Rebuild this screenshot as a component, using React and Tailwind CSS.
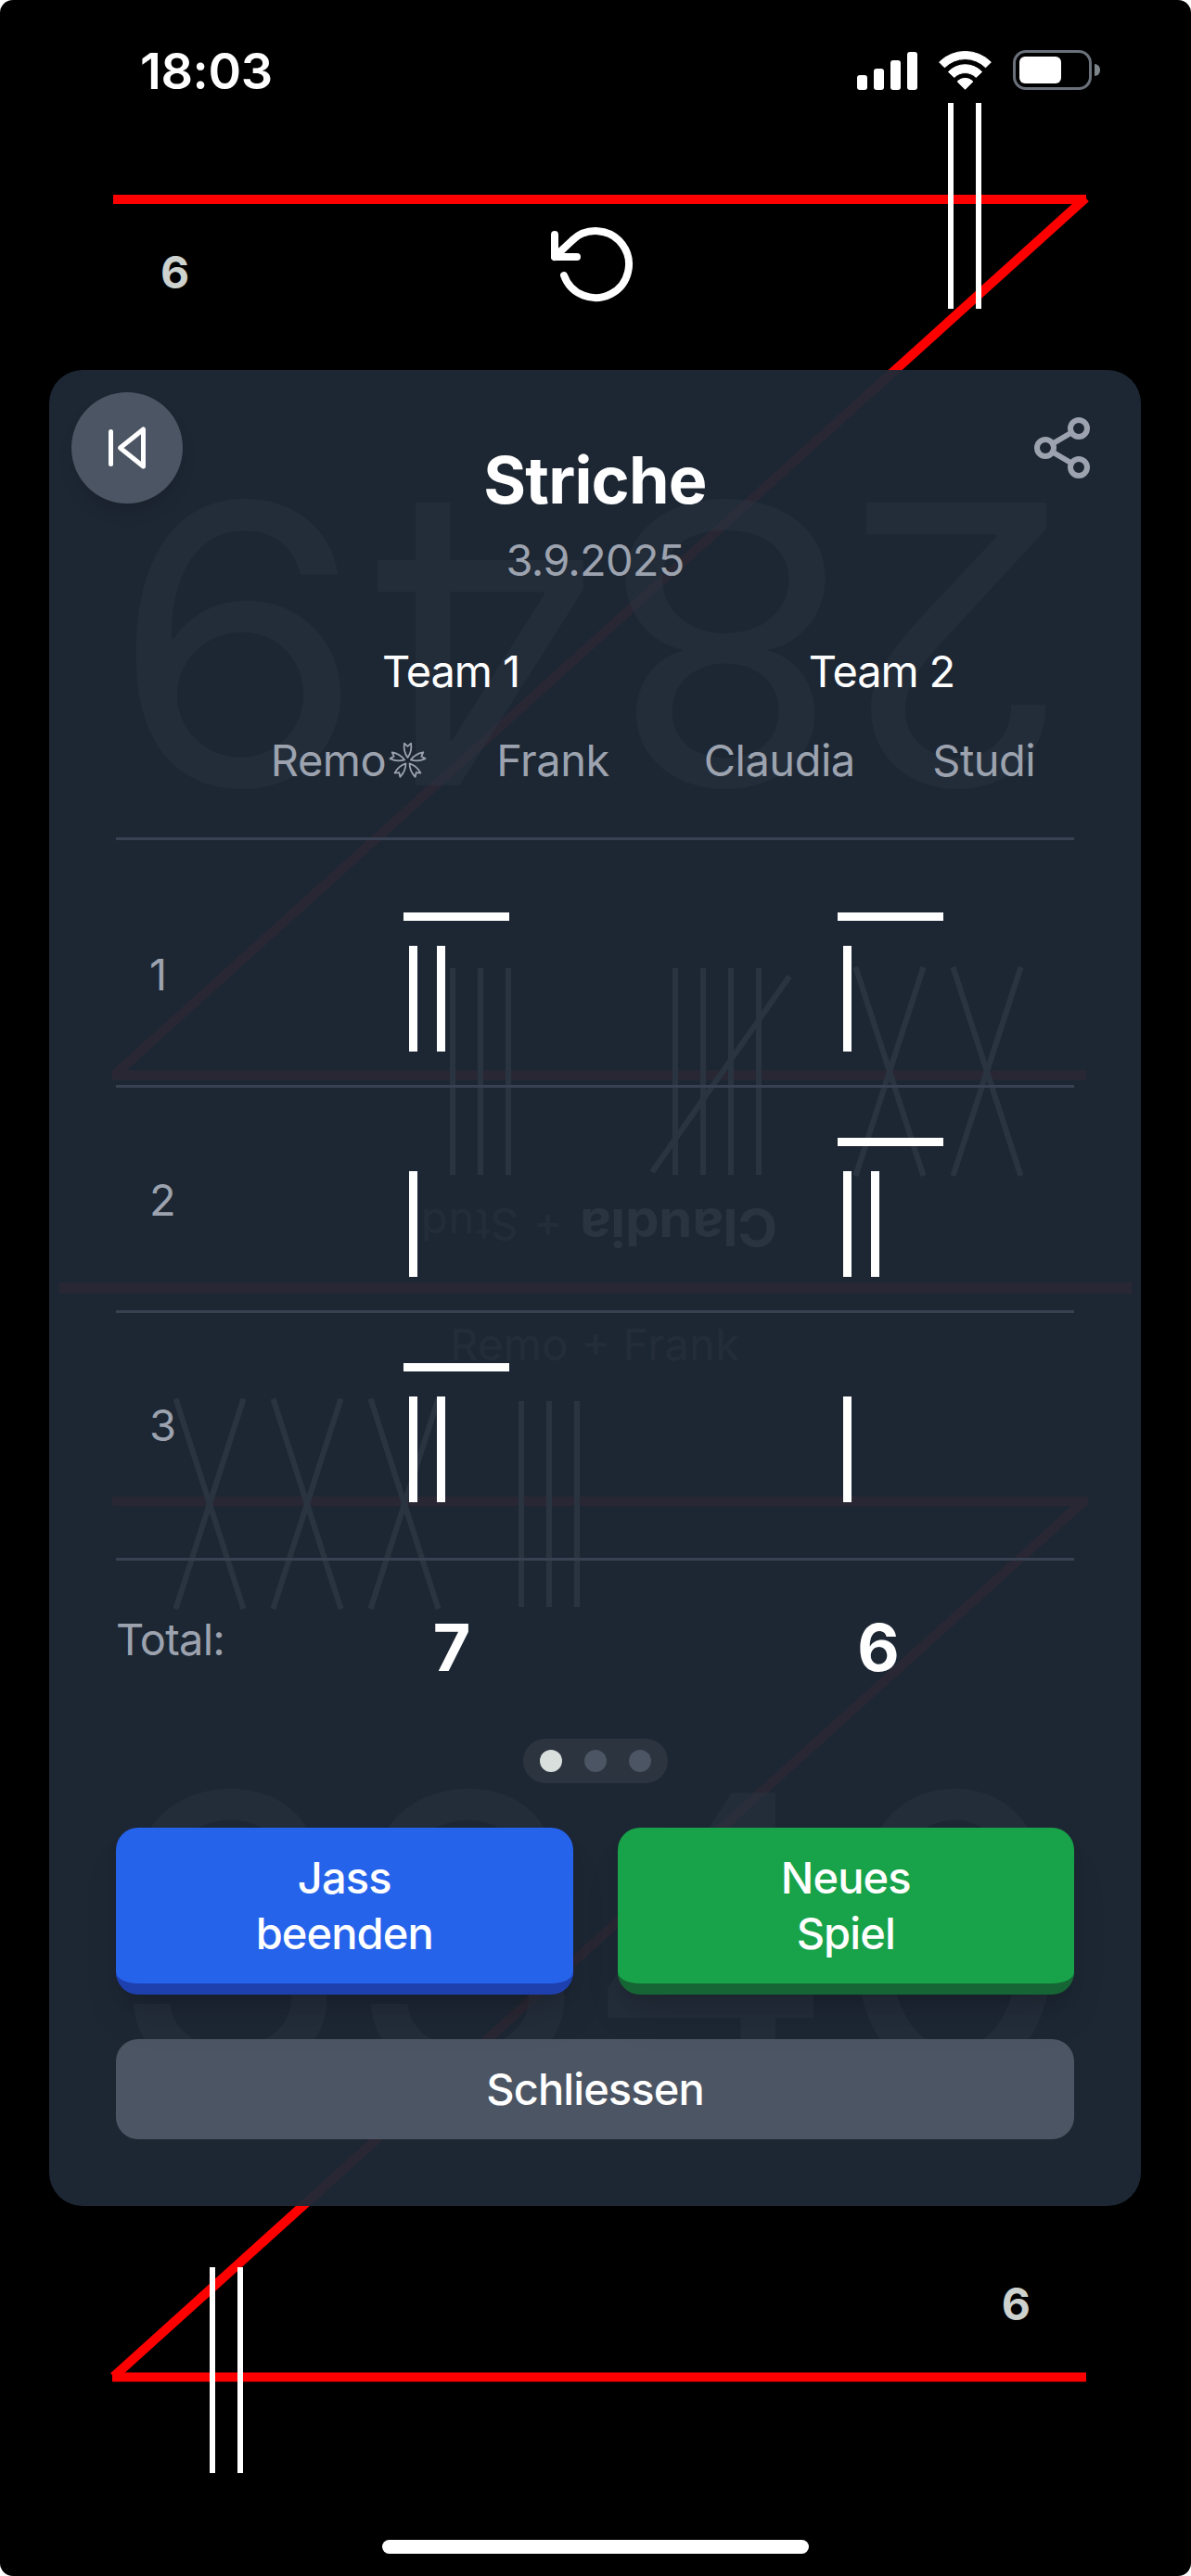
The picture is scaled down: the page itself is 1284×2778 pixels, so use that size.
import React from "react";
import { FiRotateCcw, FiSkipBack, FiShare2 } from "react-icons/fi";

const RED = "#ff0000";

/* Chalk board behind the dialog: two Z shapes, tally marks and the scores */
function Board() {
  const cross = (x1, x2, y1, y2) => (
    <path key={`${x1}-${y1}`} d={`M${x1} ${y1}L${x2} ${y2}M${x2} ${y1}L${x1} ${y2}`} />
  );
  return (
    <svg
      className="absolute inset-0"
      width="1284"
      height="2778"
      viewBox="0 0 1284 2778"
      fill="none"
      fontFamily="Inter, sans-serif"
    >
      <g stroke={RED} strokeWidth="10">
        <path d="M122 215H1171" />
        <path d="M1170.5 213.5L123 1159.5" />
        <path d="M121 1159.5H1171" />
        <path d="M64 1389H1220" strokeWidth="12" />
        <path d="M121 1619H1173" />
        <path d="M1170.5 1617L122.5 2563" />
        <path d="M121 2563.5H1171" />
      </g>
      <g stroke="#ffffff" strokeWidth="6">
        <path d="M1025 111V333M1055 111V333M229 2445V2667M259 2445V2667" />
        <path d="M488 1044V1267M518 1044V1267M548 1044V1267" />
        <path d="M728 1044V1267M758 1044V1267M788 1044V1267M818 1044V1267M851 1053L703 1264" />
        {cross(922.5, 995.5, 1043, 1268)}
        {cross(1027.5, 1100.5, 1043, 1268)}
        {cross(189.5, 262.5, 1508.5, 1735)}
        {cross(294.5, 367.5, 1508.5, 1735)}
        {cross(399.5, 472.5, 1508.5, 1735)}
        <path d="M562 1511V1733M592 1511V1733M622 1511V1733" />
      </g>
      <g fill="#ffffff" fillOpacity="0.45" fontSize="419" textAnchor="middle">
        <text transform="translate(1032 542) rotate(180)">2</text>
        <text transform="translate(782 542) rotate(180) scale(1.03 1)">8</text>
        <text transform="translate(518 542) rotate(180)">4</text>
        <text transform="translate(257 542) rotate(180) scale(1.05 1)">9</text>
        <text x="248" y="2238">3</text>
        <text x="504" y="2238">3</text>
        <text x="766" y="2238">4</text>
        <text x="1029" y="2238">0</text>
      </g>
      <g fill="#ffffff">
        <text
          transform="translate(838 1304) rotate(180)"
          fontSize="55"
          fontWeight="700"
          textLength="213"
          lengthAdjust="spacingAndGlyphs"
        >
          Claudia
        </text>
        <text
          transform="translate(606 1304) rotate(180)"
          fontSize="47"
          fillOpacity="0.45"
          textLength="165"
        >
          + Studi
        </text>
        <text x="485" y="1467" fontSize="47" fillOpacity="0.45" textLength="312">
          Remo + Frank
        </text>
      </g>
    </svg>
  );
}

function StatusBar() {
  return (
    <header className="relative flex h-[150px] shrink-0 items-start justify-between pl-[151px] pr-[101px] pt-[46px] text-white">
      <div className="h-[62px] text-[54px] font-semibold leading-[62px] tracking-[-0.4px]">18:03</div>
      <div className="mt-2 flex items-center">
        <div className="flex h-[42px] items-end gap-[7px]">
          <div className="h-4 w-[11px] rounded-[3px] bg-white" />
          <div className="h-[23px] w-[11px] rounded-[3px] bg-white" />
          <div className="h-8 w-[11px] rounded-[3px] bg-white" />
          <div className="h-[41px] w-[11px] rounded-[3px] bg-white" />
        </div>
        <svg
          className="ml-[23px]"
          width="57"
          height="42"
          viewBox="0 0 57 42"
          fill="#fff"
          stroke="#fff"
          strokeWidth="1"
          strokeLinejoin="round"
        >
          <path d="M0.6 12A39.5 39.5 0 0 1 56.4 12L50.6 17.8A31 31 0 0 0 6.4 17.8Z" />
          <path d="M10.4 22.5A25 25 0 0 1 46.6 22.5L40.2 28.4A16.5 16.5 0 0 0 16.8 28.4Z" />
          <path d="M20.2 33A11.3 11.3 0 0 1 36.8 33L28.5 41.3Z" />
        </svg>
        <div className="ml-[23px] h-[43px] w-[85px] rounded-[14px] border-[3px] border-[#6b717b] p-1">
          <div className="h-[29px] w-[45px] rounded-[6px] bg-white" />
        </div>
        <div className="ml-[3px] mr-[-3px] h-[13px] w-[6px] rounded-r-full bg-[#7d8588]" />
      </div>
    </header>
  );
}

function Flower() {
  return (
    <svg
      className="ml-[3px] inline-block"
      width="41"
      height="41"
      viewBox="-20.5 -20.5 41 41"
      fill="none"
      stroke="#9ca3af"
      strokeWidth="1.8"
      strokeLinejoin="round"
    >
      {[0, 72, 144, 216, 288].map((a) => (
        <path
          key={a}
          transform={`rotate(${a})`}
          d="M0 -3.5C-2.6 -7 -4.6 -12 -3.6 -18.8L0 -15.6L3.6 -18.8C4.6 -12 2.6 -7 0 -3.5Z"
        />
      ))}
    </svg>
  );
}

function Score({ top, count }) {
  return (
    <div className="w-[114px]">
      <div className={top ? "h-[9px] bg-white" : "h-[9px]"} />
      <div className="mt-[27px] flex h-[114px] gap-[21px] pl-[6px]">
        {Array.from({ length: count }, (_, i) => (
          <div key={i} className="w-[9px] bg-white" />
        ))}
      </div>
    </div>
  );
}

const rounds = [
  { n: 1, a: { top: true, count: 2 }, b: { top: true, count: 1 } },
  { n: 2, a: { top: false, count: 1 }, b: { top: true, count: 2 } },
  { n: 3, a: { top: true, count: 2 }, b: { top: false, count: 1 } },
];

function Dialog() {
  return (
    <main className="relative mx-[53px] mt-[66px] h-[1980px] w-[1177px] shrink-0 rounded-[36px] bg-[#1f2937]/95 px-[72px] pt-[74px] text-[47px] leading-[72px] tracking-[-0.5px] text-gray-400">
      <button className="absolute left-6 top-6 flex size-[120px] items-center justify-center rounded-full bg-[#4b5563] text-white shadow-[0_12px_18px_-3px_rgba(0,0,0,0.15)]">
        <FiSkipBack size={60} />
      </button>
      <button className="absolute right-[49px] top-12 text-[#9ca3af]">
        <FiShare2 size={72} />
      </button>

      <h1 className="text-center text-[70px] font-bold leading-[90px] tracking-[-0.8px] text-white">Striche</h1>
      <p className="mt-[5px] text-center tracking-[-0.8px] text-[#9ca3af]">3.9.2025</p>

      <div className="ml-[141px] mt-12 flex w-[905px] justify-between text-center tracking-[-1.1px] text-white">
        <div className="w-[440px]">Team 1</div>
        <div className="w-[441px]">Team 2</div>
      </div>
      <div className="ml-[141px] mt-6 flex w-[905px] justify-between text-center text-[#9ca3af]">
        <div className="flex w-[440px]">
          <div className="flex w-1/2 items-center justify-center">
            Remo
            <Flower />
          </div>
          <div className="w-1/2">Frank</div>
        </div>
        <div className="flex w-[441px]">
          <div className="w-1/2">Claudia</div>
          <div className="w-1/2">Studi</div>
        </div>
      </div>

      <div className="mt-[47px] border-t-[3px] border-[#374151] pt-6">
        {rounds.map((r) => (
          <div
            key={r.n}
            className="flex items-start border-b-[3px] border-[#374151] pb-9 pt-[54px] last:pb-[60px]"
          >
            <div className="mt-[31px] w-[310px] pl-[36px] text-[#9ca3af]">{r.n}</div>
            <Score {...r.a} />
            <div className="w-[354px]" />
            <Score {...r.b} />
          </div>
        ))}
      </div>

      <div className="mt-[49px] flex h-[90px] items-start tracking-normal">
        <div className="w-[141px] shrink-0 tracking-[-0.8px] text-[#9ca3af]">Total:</div>
        <div className="w-[442px] shrink-0 text-center text-[70px] font-bold leading-[90px] text-white">7</div>
        <div className="ml-[18px] w-[442px] shrink-0 text-center text-[70px] font-bold leading-[90px] text-white">
          6
        </div>
      </div>

      <div className="mx-auto mt-[53px] flex h-12 w-[156px] items-center justify-center gap-6 rounded-full bg-[#2b343f]">
        <div className="size-6 rounded-full bg-[#d9dfdc]" />
        <div className="size-6 rounded-full bg-[#4b5563]" />
        <div className="size-6 rounded-full bg-[#4b5563]" />
      </div>

      <div className="mt-12 flex gap-12 font-medium leading-[60px] tracking-[-0.9px] text-white">
        <button className="h-[180px] flex-1 rounded-[24px] border-b-[12px] border-[#1e40af] bg-[#2563eb] tracking-[-0.9px] shadow-[0_30px_45px_-9px_rgba(0,0,0,0.12),0_12px_18px_-6px_rgba(0,0,0,0.12)]">
          Jass
          <br />
          beenden
        </button>
        <button className="h-[180px] flex-1 rounded-[24px] border-b-[12px] border-[#166534] bg-[#18a34a] tracking-[-0.9px] shadow-[0_30px_45px_-9px_rgba(0,0,0,0.12),0_12px_18px_-6px_rgba(0,0,0,0.12)]">
          Neues
          <br />
          Spiel
        </button>
      </div>
      <button className="mt-12 block h-[108px] w-full rounded-[24px] bg-[#4b5563] font-medium tracking-[-0.9px] text-white">
        Schliessen
      </button>
    </main>
  );
}

export default function App() {
  return (
    <div className="h-[2778px] w-[1284px] overflow-hidden bg-white font-['Inter',sans-serif]">
      <div className="relative flex h-full w-full flex-col overflow-hidden rounded-[14px] bg-black">
        <Board />
        <StatusBar />
        <div className="relative mt-[87px] flex h-24 shrink-0 items-center">
          <div className="ml-[173px] mt-[17px] w-[421px] text-[48px] font-bold leading-[60px] text-[#cdd2cf]">6</div>
          <FiRotateCcw size={96} color="#fff" />
        </div>
        <Dialog />
        <div className="relative mt-[76px] flex h-[60px] shrink-0 justify-end pr-[173px] text-[48px] font-bold leading-[60px] text-[#cdd2cf]">
          6
        </div>
        <div className="relative mx-auto mb-6 mt-auto h-[15px] w-[460px] shrink-0 rounded-full bg-white" />
      </div>
    </div>
  );
}
